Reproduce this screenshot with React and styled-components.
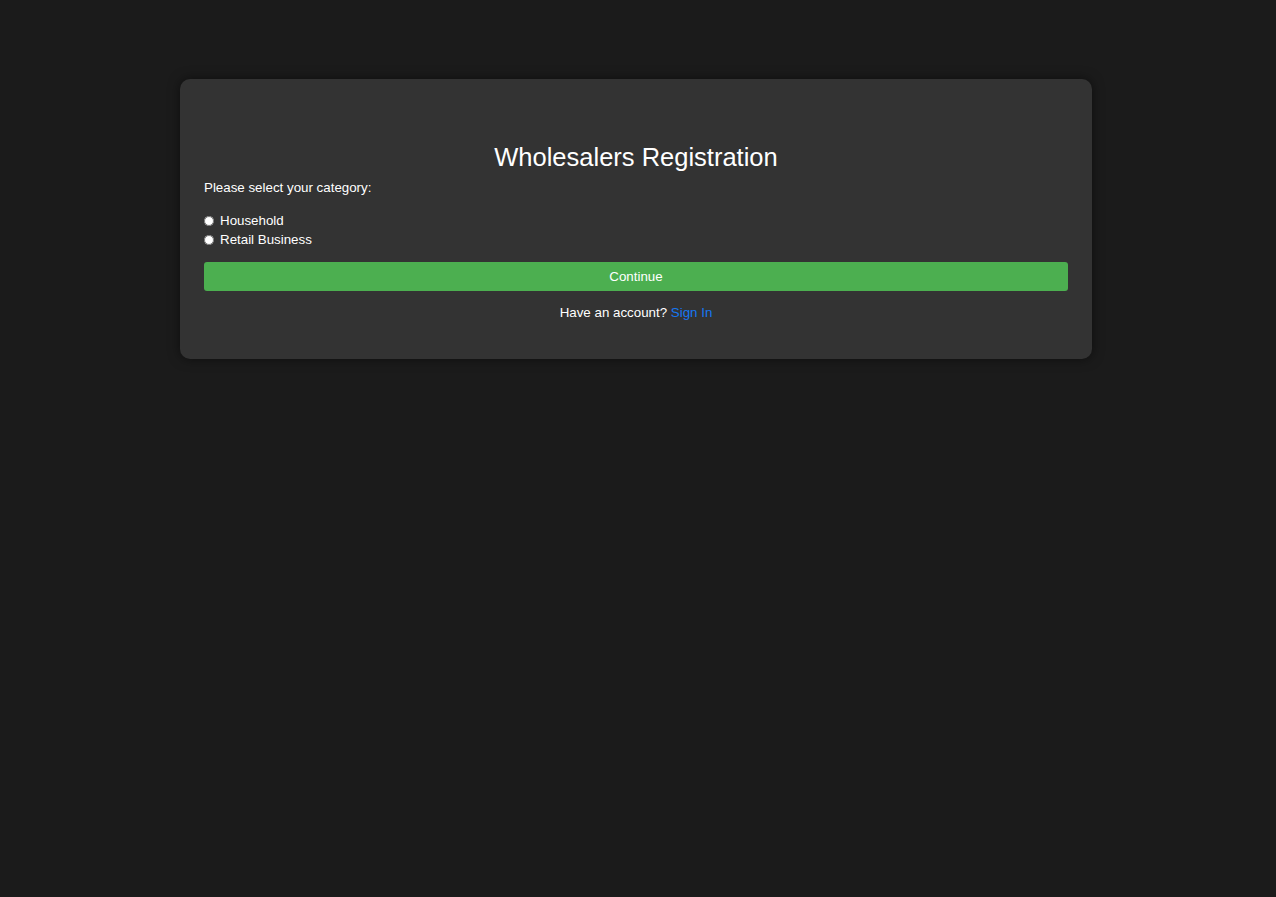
import React from "react";
import styled, { createGlobalStyle } from "styled-components";

const Global = createGlobalStyle`
  html, body { margin: 0; padding: 0; background: #1b1b1b; }
  body { font-family: "Liberation Sans", Arial, sans-serif; color: #fff; }
`;

const Page = styled.div`
  min-height: 897px;
  padding-top: 79px;
  box-sizing: border-box;
`;

const Card = styled.div`
  width: 912px;
  margin: 0 auto;
  transform: translateX(-2px);
  box-sizing: border-box;
  background: #333333;
  border-radius: 10px;
  box-shadow: 0 0 12px rgba(0, 0, 0, 0.5);
  padding: 24px 24px 38px;
`;

const Title = styled.h1`
  margin: 39px 0 8px;
  text-align: center;
  font-size: 25.5px;
  font-weight: normal;
  line-height: 30px;
`;

const Prompt = styled.p`
  margin: 0 0 15px;
  font-size: 13.33px;
  line-height: 16px;
`;

const Options = styled.div`
  display: flex;
  flex-direction: column;
  margin-bottom: 13px;
`;

const Option = styled.label`
  display: flex;
  align-items: center;
  font-size: 13.33px;
  line-height: 19px;
  height: 19px;
`;

const Radio = styled.input`
  margin: 0 6px 0 0;
  width: 10px;
  height: 10px;
  accent-color: #fff;
`;

const Button = styled.button`
  display: block;
  width: 100%;
  height: 29px;
  border: none;
  border-radius: 3px;
  background: #4caf50;
  color: #fff;
  font-family: inherit;
  font-size: 13.33px;
  cursor: pointer;
`;

const Footer = styled.p`
  margin: 14px 0 0;
  text-align: center;
  font-size: 13.33px;
  line-height: 16px;
`;

const Link = styled.a`
  color: #1677f2;
  text-decoration: none;
`;

export default function App() {
  return (
    <Page>
      <Global />
      <Card>
        <Title>Wholesalers Registration</Title>
        <Prompt>Please select your category:</Prompt>
        <Options>
          <Option>
            <Radio type="radio" name="cat" value="household" />
            Household
          </Option>
          <Option>
            <Radio type="radio" name="cat" value="retail" />
            Retail Business
          </Option>
        </Options>
        <Button>Continue</Button>
        <Footer>
          Have an account? <Link href="#">Sign In</Link>
        </Footer>
      </Card>
    </Page>
  );
}
